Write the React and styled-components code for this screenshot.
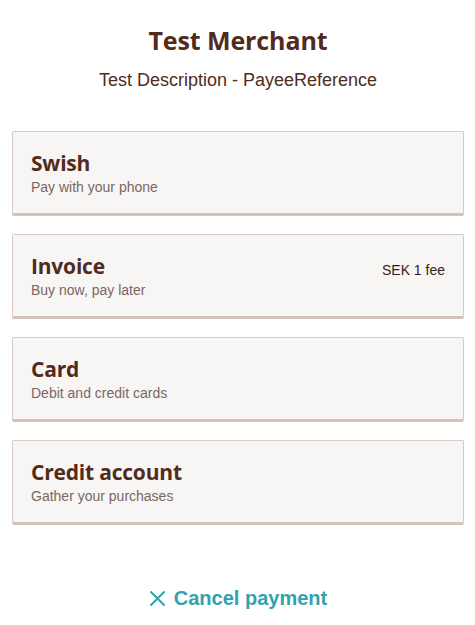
import React from 'react';
import styled, { createGlobalStyle } from 'styled-components';

const GlobalStyle = createGlobalStyle`
  body {
    margin: 0;
    background: #fff;
    font-family: "Liberation Sans", Arial, sans-serif;
  }
`;

const Page = styled.main`
  width: 475px;
  padding: 25px 11px 0 12px;
  box-sizing: border-box;
`;

const Header = styled.header`
  text-align: center;
  color: #512b1b;
`;

const Merchant = styled.h1`
  margin: 0;
  font-family: "Open Sans", sans-serif;
  font-weight: 700;
  font-size: 25px;
  line-height: 30px;
  letter-spacing: -0.1px;
`;

const Description = styled.p`
  margin: 14px 0 0;
  font-size: 18px;
  line-height: 22px;
`;

const List = styled.ul`
  list-style: none;
  margin: 40px 0 0;
  padding: 0;
  display: flex;
  flex-direction: column;
  gap: 18px;
`;

const Card = styled.li`
  display: flex;
  justify-content: space-between;
  align-items: flex-start;
  height: 85px;
  box-sizing: border-box;
  padding: 19px 18px 0;
  background: #f8f6f4;
  border: 1px solid #d8cbc4;
  border-bottom: 3px solid #d3c2b9;
  border-radius: 2px;
  cursor: pointer;
`;

const Name = styled.div`
  font-family: "Open Sans", sans-serif;
  font-weight: 700;
  font-size: 21px;
  line-height: 24px;
  color: #512b1b;
  letter-spacing: -0.2px;
`;

const Sub = styled.div`
  margin-top: 4px;
  font-size: 14px;
  line-height: 17px;
  color: #7a6663;
`;

const Fee = styled.div`
  margin-top: 8px;
  font-size: 14px;
  color: #3a2018;
`;

const Cancel = styled.button`
  display: flex;
  align-items: center;
  gap: 8px;
  margin: 62px auto 0;
  background: none;
  border: 0;
  padding: 0;
  font-family: "Liberation Sans", Arial, sans-serif;
  font-weight: 700;
  font-size: 20px;
  color: #31a3ae;
  cursor: pointer;
`;

const methods = [
  { name: 'Swish', sub: 'Pay with your phone' },
  { name: 'Invoice', sub: 'Buy now, pay later', fee: 'SEK 1 fee' },
  { name: 'Card', sub: 'Debit and credit cards' },
  { name: 'Credit account', sub: 'Gather your purchases' },
];

const App = () => (
  <>
    <GlobalStyle />
    <Page>
      <Header>
        <Merchant>Test Merchant</Merchant>
        <Description>Test Description - PayeeReference</Description>
      </Header>
      <List>
        {methods.map((m) => (
          <Card key={m.name}>
            <div>
              <Name>{m.name}</Name>
              <Sub>{m.sub}</Sub>
            </div>
            {m.fee && <Fee>{m.fee}</Fee>}
          </Card>
        ))}
      </List>
      <Cancel>
        <svg width="17" height="17" viewBox="0 0 17 17">
          <path d="M1.5 1.5L15.5 15.5M15.5 1.5L1.5 15.5" stroke="currentColor" strokeWidth="2" fill="none" />
        </svg>
        Cancel payment
      </Cancel>
    </Page>
  </>
);

export default App;
